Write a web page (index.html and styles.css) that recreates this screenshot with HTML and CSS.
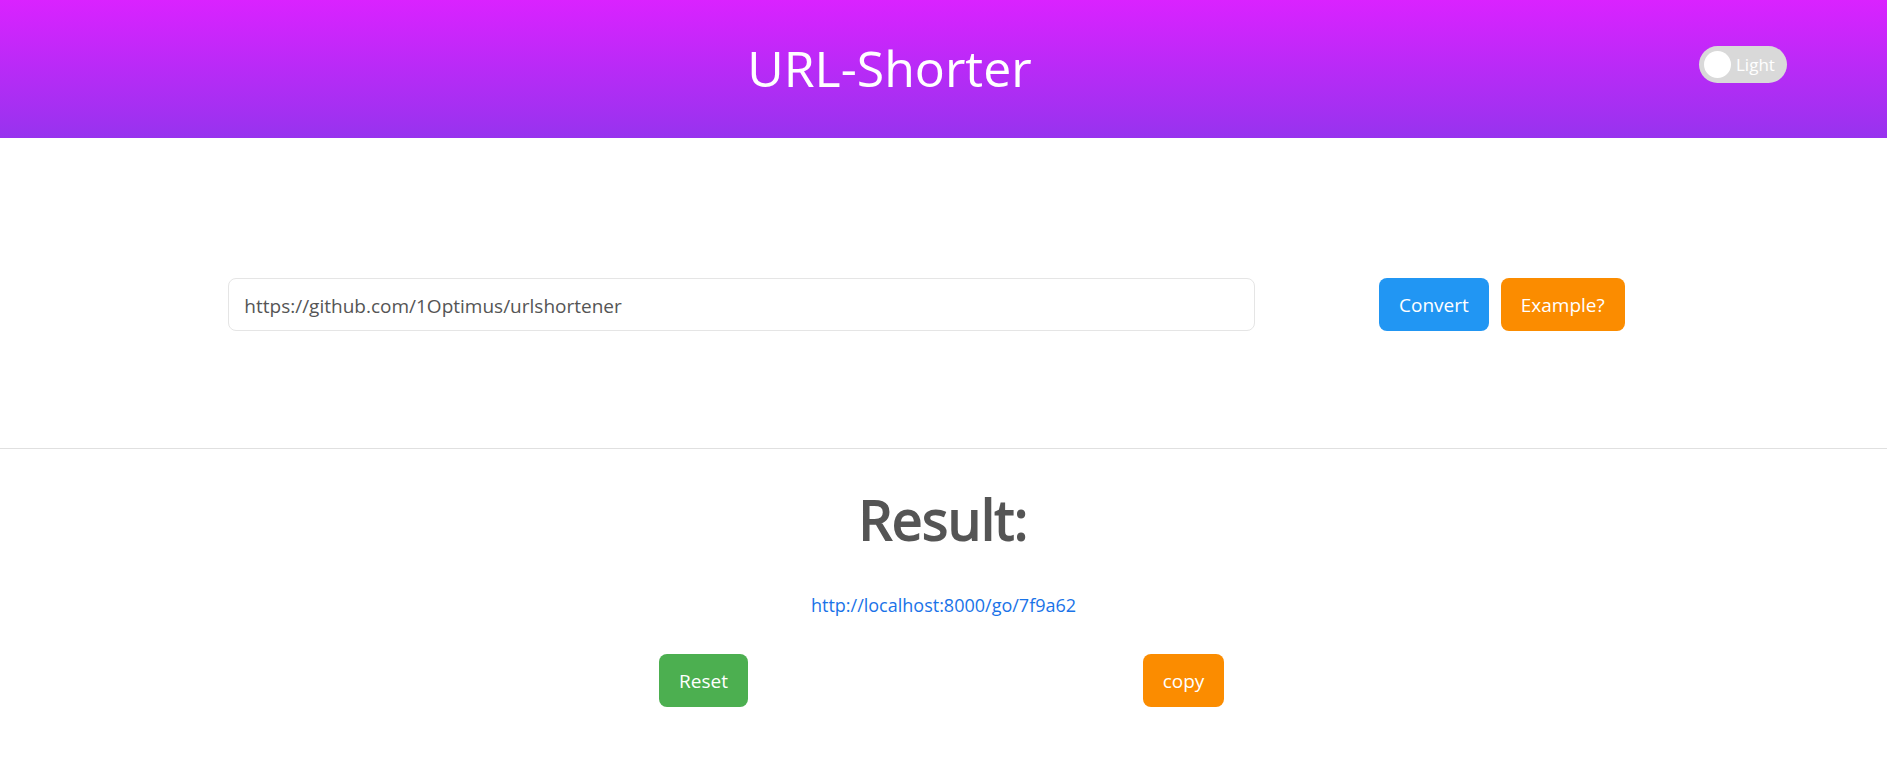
FILE: index.html
```html
<!DOCTYPE html>
<html lang="en">
<head>
<meta charset="utf-8">
<meta name="viewport" content="width=device-width, initial-scale=1">
<title>URL-Shorter</title>
<link rel="stylesheet" href="styles.css">
</head>
<body>
<header class="header">
  <h1 class="title">URL-Shorter</h1>
  <label class="switch"><input class="switch-knob" type="checkbox"><span>Light</span></label>
</header>
<main>
  <form class="form">
    <input class="url-input" type="text" aria-label="URL" value="https://github.com/1Optimus/urlshortener">
    <div class="form-actions">
      <button class="button button-blue" type="button">Convert</button>
      <button class="button button-orange" type="button">Example?</button>
    </div>
  </form>
  <section class="result">
    <h2 class="result-title">Result:</h2>
    <a class="result-link" href="http://localhost:8000/go/7f9a62">http://localhost:8000/go/7f9a62</a>
    <div class="result-actions">
      <button class="button button-green" type="button">Reset</button>
      <button class="button button-orange" type="button">copy</button>
    </div>
  </section>
</main>
</body>
</html>
```
FILE: styles.css
```css
* {
  box-sizing: border-box;
}

body {
  margin: 0;
  background: #fff;
  color: #555;
  font-family: "Segoe UI", "Open Sans", "Noto Sans", sans-serif;
  font-size: 19px;
  line-height: 28px;
}

.header {
  display: flex;
  align-items: flex-start;
  padding: 32px 100px 34px 80px;
  background: linear-gradient(#da22ff, #9733ee);
}

.title {
  flex: 1;
  margin: 0;
  color: #fff;
  font-size: 50px;
  font-weight: 400;
  line-height: 72px;
  text-align: center;
}

.switch {
  display: flex;
  align-items: center;
  gap: 5px;
  width: 88px;
  height: 37px;
  margin-top: 14px;
  padding: 2px 5px;
  border-radius: 20px;
  background: #d9d9d9;
  color: #fff;
  font-size: 17px;
}

.switch-knob {
  appearance: none;
  flex: none;
  width: 27px;
  height: 27px;
  margin: 0;
  border-radius: 50%;
  background: #fff;
}

.form {
  display: flex;
  gap: 124px;
  padding: 140px 13.9% 117px 12.1%;
  border-bottom: 1px solid #e0e0e0;
}

.url-input {
  flex: 1;
  min-width: 0;
  height: 53px;
  padding: 2px 15px 0;
  border: 1px solid #e5e5e5;
  border-radius: 8px;
  background: #fff;
  color: #555;
  font: inherit;
}

.form-actions {
  display: flex;
  gap: 12px;
}

.button {
  height: 53px;
  padding: 1px 20px 0;
  border: 0;
  border-radius: 8px;
  color: #fff;
  font: inherit;
}

.button-blue {
  background: #2196f3;
}

.button-orange {
  background: #fb8c00;
}

.button-green {
  background: #4caf50;
}

.result {
  display: flex;
  flex-direction: column;
  align-items: center;
  padding: 30px 16px;
}

.result-title {
  margin: 0 0 32px;
  font-size: 54px;
  font-weight: 400;
  line-height: 80px;
  -webkit-text-stroke: 2px currentColor;
}

.result-link {
  color: #1a73e8;
  font-size: 18px;
  text-decoration: none;
}

.result-actions {
  display: grid;
  grid-template-columns: 1fr 1fr;
  justify-items: center;
  width: 100%;
  max-width: 960px;
  margin-top: 35px;
}
```
